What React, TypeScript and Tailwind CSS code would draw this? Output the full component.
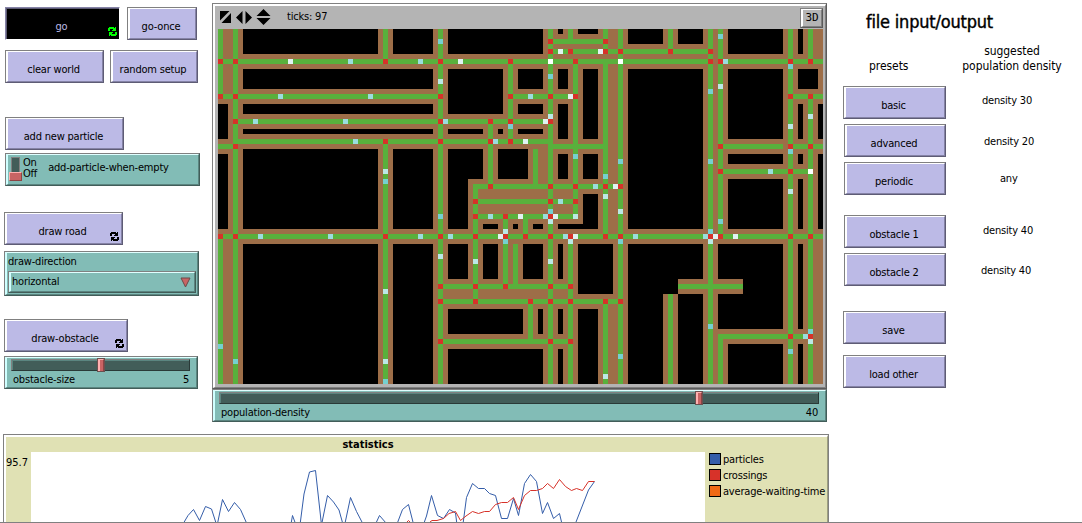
import React from "react";

type Rect = [number, number, number, number];
type Car = [number, number, string];

// Open ground, as [left, top, right, bottom] in patch units.
const GROUND: Rect[] = [
  [5, 0, 32, 5], [35, 0, 43, 5], [46, 0, 65, 5], [68, 0, 69, 1], [72, 0, 76, 1],
  [82, 0, 89, 3], [92, 0, 97, 3], [102, 0, 113, 5], [116, 0, 117, 5],
  [5, 8, 43, 12], [5, 15, 43, 17], [5, 20, 43, 21], [0, 15, 2, 22], [0, 25, 2, 40],
  [5, 24, 32, 40], [35, 24, 43, 40], [46, 8, 57, 17], [60, 8, 65, 12], [60, 15, 65, 17],
  [60, 20, 65, 21], [46, 20, 53, 21], [56, 20, 57, 21], [68, 8, 70, 12], [68, 15, 70, 22],
  [73, 8, 76, 22], [46, 24, 50, 40], [50, 24, 53, 30], [56, 24, 62, 30], [68, 25, 70, 30],
  [73, 25, 76, 30], [73, 33, 76, 40], [68, 39, 76, 40], [53, 39, 56, 40], [59, 39, 60, 40],
  [63, 39, 65, 40], [5, 43, 32, 71], [35, 43, 43, 71], [46, 43, 50, 50], [53, 43, 56, 50],
  [61, 43, 65, 50], [68, 43, 69, 50], [72, 43, 79, 53], [46, 56, 61, 61], [64, 56, 65, 61],
  [68, 56, 69, 61], [72, 56, 76, 71], [46, 64, 65, 71], [68, 64, 69, 71],
  [82, 8, 97, 40], [102, 8, 113, 22], [102, 25, 113, 27], [102, 30, 113, 40],
  [116, 8, 120, 12], [116, 15, 117, 22], [120, 15, 121, 22], [120, 25, 121, 40],
  [116, 25, 117, 27], [116, 30, 117, 40], [82, 43, 92, 53], [92, 43, 97, 50],
  [82, 53, 89, 71], [92, 53, 97, 71], [100, 43, 113, 50], [105, 50, 113, 53],
  [100, 53, 113, 60], [102, 63, 113, 71], [116, 43, 117, 60], [116, 63, 117, 71],
];

// Horizontal roads: [row, first column, end column]
const ROWS: [number, number, number][] = [
  [2, 66, 78], [4, 66, 99], [6, 0, 99], [6, 100, 121], [13, 0, 45], [13, 58, 72],
  [13, 114, 121], [18, 3, 67], [22, 3, 67], [23, 0, 4], [23, 66, 78], [23, 100, 113],
  [23, 114, 121], [28, 100, 119], [31, 51, 81], [34, 51, 72], [37, 51, 72], [41, 0, 121],
  [51, 44, 71], [51, 92, 105], [54, 44, 81], [61, 100, 119], [62, 44, 71],
];

// Vertical roads: [column, first row, end row]
const COLS: [number, number, number][] = [
  [0, 0, 14], [0, 41, 71], [3, 0, 71], [33, 0, 7], [33, 22, 71], [44, 0, 71], [51, 31, 55],
  [54, 18, 32], [57, 37, 52], [58, 6, 23], [59, 43, 52], [61, 37, 42], [62, 54, 63],
  [63, 24, 32], [66, 0, 71], [70, 0, 3], [70, 41, 71], [71, 6, 38], [77, 0, 5], [77, 6, 42],
  [77, 54, 71], [80, 0, 71], [90, 0, 5], [90, 53, 71], [98, 0, 71], [100, 0, 42],
  [100, 61, 71], [114, 0, 71], [118, 0, 7], [118, 13, 71],
];

const CROSSINGS: [number, number[]][] = [
  [2, [66, 77]], [4, [66, 70, 77, 80, 90, 98]],
  [6, [0, 3, 33, 44, 58, 71, 98, 100, 114, 118]],
  [13, [0, 3, 44, 58, 66, 71, 114, 118]], [18, [3, 44, 54, 58, 66]],
  [22, [33, 44, 54, 58]], [23, [3, 100, 114, 118]], [28, [100, 114]],
  [31, [54, 66, 71, 77, 80]], [34, [51, 66, 71]], [37, [51, 57, 66]],
  [41, [0, 3, 33, 44, 51, 57, 61, 66, 70, 77, 80, 98, 100, 114, 118]],
  [51, [44, 51, 57, 66, 70]], [54, [44, 51, 62, 66, 70, 77, 80]],
  [61, [114, 118]], [62, [44, 66, 70]],
];

const A = "#75d0d0";
const B = "#9adddd";
const C = "#bbe8e6";
const D = "#e0f3f2";
const W = "#ffffff";
const CARS: Car[] = [
  [14, 6, D], [26, 6, B], [40, 6, B], [12, 13, B], [30, 13, B], [7, 18, B], [25, 18, B],
  [27, 22, B], [33, 28, C], [33, 30, A], [44, 2, A], [48, 6, D], [44, 10, C], [66, 6, W],
  [68, 4, D], [76, 4, D], [66, 9, A], [62, 13, B], [70, 13, D], [66, 17, C], [65, 18, D],
  [45, 18, B], [58, 19, A], [55, 22, B], [61, 22, D], [71, 25, A], [77, 29, A], [75, 31, B],
  [79, 31, D], [77, 33, C], [68, 34, B], [66, 36, A], [80, 26, A], [80, 6, W], [80, 36, C],
  [100, 1, A], [101, 6, B], [114, 7, A], [98, 12, A], [100, 11, C], [118, 17, C],
  [114, 19, C], [114, 24, A], [98, 26, A], [110, 28, B], [118, 28, W], [114, 32, C],
  [8, 41, B], [22, 41, B], [40, 41, B], [33, 52, C], [33, 66, C], [33, 70, A], [0, 63, A],
  [3, 66, A], [44, 37, A], [54, 37, B], [60, 37, D], [65, 37, B], [67, 37, D], [71, 37, C],
  [66, 38, C], [57, 40, C], [46, 41, B], [56, 41, D], [57, 42, A], [69, 41, B], [71, 41, D],
  [70, 42, C], [44, 45, C], [51, 46, C], [66, 46, C], [77, 69, C], [80, 65, A], [80, 42, A],
  [83, 41, B], [97, 41, B], [99, 41, D], [103, 41, D], [98, 40, A], [98, 42, C],
  [100, 38, A], [98, 59, A], [114, 64, A], [117, 61, B], [118, 60, A], [118, 62, C],
];

function World() {
  return (
    <svg width="605" height="355" viewBox="0 0 121 71" shapeRendering="crispEdges" className="block">
      <rect width="121" height="71" fill="#9d6e48" />
      {GROUND.map(([l, t, r, b], i) => (
        <rect key={i} x={l} y={t} width={r - l} height={b - t} fill="#000" />
      ))}
      {ROWS.map(([y, a, b], i) => (
        <rect key={i} x={a} y={y} width={b - a} height="1" fill="#59b03c" />
      ))}
      {COLS.map(([x, a, b], i) => (
        <rect key={i} x={x} y={a} width="1" height={b - a} fill="#59b03c" />
      ))}
      {CROSSINGS.map(([y, xs]) =>
        xs.map((x) => <rect key={`${x}-${y}`} x={x} y={y} width="1" height="1" fill="#d73229" />)
      )}
      {CARS.map(([x, y, c], i) => (
        <rect key={i} x={x} y={y} width="1" height="1" fill={c} />
      ))}
    </svg>
  );
}

function LoopIcon({ className }: { className: string }) {
  return (
    <svg width="9" height="10" viewBox="0 0 9 10" shapeRendering="crispEdges" fill="currentColor" className={className}>
      <path d="M1 0h5v1h1v-1h1v4h-4v-1h1v-1h-3v2h-2v-3h1z" />
      <path d="M8 9h-5v-1h-1v1h-1v-4h4v1h-1v1h3v-2h2v3h-1z" />
    </svg>
  );
}

function Button({ label, className = "", loop = false }: { label: string; className?: string; loop?: boolean }) {
  return (
    <button
      className={`block h-[33px] shrink-0 border border-t-[#808080] border-l-[#808080] border-r-[#5e5c75] border-b-[#5e5c75] ${className}`}
    >
      <span className="relative flex h-full items-center justify-center border-t border-r border-b border-l-2 border-t-white border-r-[#8583a6] border-b-[#8583a6] border-l-white bg-[#bcbae6] pt-[7px] pr-[3px]">
        {label}
        {loop && <LoopIcon className="absolute right-[2px] bottom-[1px]" />}
      </span>
    </button>
  );
}

function Teal({ className = "", children }: { className?: string; children: React.ReactNode }) {
  return (
    <div className={`shrink-0 border border-t-[#808080] border-l-[#808080] border-r-[#425d59] border-b-[#425d59] ${className}`}>
      <div className="h-full border-t border-r border-b border-l-2 border-t-[#e0ffff] border-r-[#5b8580] border-b-[#5b8580] border-l-[#d0ffff] bg-[#82bcb6]">
        {children}
      </div>
    </div>
  );
}

function Slider({ label, value, className, left, right, knob }: { label: string; value: string; className: string; left: string; right: string; knob: string }) {
  return (
    <Teal className={`h-[33px] ${className}`}>
      <div className={`flex h-full flex-col ${left} ${right}`}>
        <div className="relative mt-[1px] h-[12px] border border-t-[#808080] border-r-[#2a3a38] border-b-[#2a3a38] border-l-[#808080]">
          <div className="h-full border-t border-l border-[#5b8580] bg-[#425d59]" />
          <div className={`absolute -top-[2px] h-[14px] w-[8px] border border-[#6b5050] ${knob}`}>
            <div className="h-full border-t border-r border-l-2 border-t-[#ffb0b0] border-r-[#8c4545] border-l-[#ffb0b0] bg-[#c86464]" />
          </div>
        </div>
        <div className="flex justify-between pr-[1px] pl-[2px] pt-[2px] leading-[14px]">
          <span>{label}</span>
          <span>{value}</span>
        </div>
      </div>
    </Teal>
  );
}

function LeftPanel() {
  return (
    <div className="flex w-[212px] shrink-0 flex-col pt-[7px] pl-1">
      <div className="ml-px flex gap-[7px]">
        <button className="h-[33px] w-[115px] border border-t-[#8583a6] border-r-white border-b-white border-l-[#8583a6]">
          <span className="relative flex h-full items-center justify-center border-t border-l border-[#5e5c75] bg-black pt-[6px] pr-[3px] text-[#bcbae6]">
            go
            <LoopIcon className="absolute right-[2px] bottom-[2px] text-[#00ff00]" />
          </span>
        </button>
        <Button label="go-once" className="w-[70px]" />
      </div>
      <div className="mt-[10px] ml-px flex gap-[6px]">
        <Button label="clear world" className="w-[99px]" />
        <Button label="random setup" className="w-[88px]" />
      </div>
      <Button label="add new particle" className="mt-[34px] ml-px w-[119px]" />
      <Teal className="mt-[3px] ml-px h-[33px] w-[195px]">
        <div className="flex h-full">
          <div className="relative mt-[2px] ml-[3px] h-[24px] w-[9px] border border-[#808080] bg-[#425d59]">
            <div className="absolute -bottom-px -left-[3px] h-[9px] w-[13px] border border-[#8c4545] border-t-[#ffb0b0] border-l-[#ffb0b0] bg-[#c86464]" />
          </div>
          <div className="mt-[2px] ml-[3px] leading-[11px]">
            <div>On</div>
            <div>Off</div>
          </div>
          <span className="mt-[6px] ml-[11px] leading-[14px]">add-particle-when-empty</span>
        </div>
      </Teal>
      <Button label="draw road" loop className="mt-[26px] w-[119px]" />
      <Teal className="mt-[6px] h-[45px] w-[195px]">
        <div className="px-[1px] pt-[2px] leading-[14px]">draw-direction</div>
        <Teal className="mx-[1px] mt-[2px] h-[22px]">
          <div className="flex h-full items-center justify-between pr-[3px] pl-[1px]">
            <span>horizontal</span>
            <svg width="11" height="11" viewBox="0 0 11 11">
              <path d="M1 1h9L5.500 10z" fill="#c86464" stroke="#6b4a48" />
            </svg>
          </div>
        </Teal>
      </Teal>
      <Button label="draw-obstacle" loop className="mt-[23px] w-[124px]" />
      <Slider label="obstacle-size" value="5" className="mt-1 w-[194px]" left="pl-[4px]" right="pr-[6px]" knob="left-[85px]" />
    </div>
  );
}

function CenterPanel() {
  return (
    <div className="flex w-[615px] shrink-0 flex-col pt-[3px]">
      <div className="border border-t-[#808080] border-r-[#5a5a5a] border-b-[#5a5a5a] border-l-[#808080]">
        <div className="border-t-2 border-r border-b border-l-2 border-t-white border-r-[#7f7f7f] border-b-[#7f7f7f] border-l-white bg-[#b4b4b4]">
          <div className="flex h-[23px] items-center pr-[2px] pl-[5px]">
            <svg width="51" height="16" viewBox="0 0 51 16" className="mt-[3px] self-start">
              <path d="M0 2h9.500L0 11.500zM11 4v10H1.500z" fill="#000" />
              <path d="M16 8.500L22.500 2v13zM32 8.500L25.500 2v13z" fill="#000" />
              <path d="M36.500 7L43.500 0L50.500 7zM36.500 9h14L43.500 16z" fill="#000" />
            </svg>
            <span className="ml-[16px] grow">ticks: 97</span>
            <div className="mt-px h-[20px] w-[23px] border border-t-[#808080] border-r-[#5a5a5a] border-b-[#5a5a5a] border-l-[#808080]">
              <div className="flex h-full items-center justify-center border-t border-r border-b border-l-2 border-t-white border-r-[#7f7f7f] border-b-[#7f7f7f] border-l-white pt-px font-['DejaVu_Sans_Mono',monospace] text-[11px]">
                3D
              </div>
            </div>
          </div>
          <div className="pr-[2px] pb-[3px] pl-[3px]">
            <World />
          </div>
        </div>
      </div>
      <Slider label="population-density" value="40" className="w-[615px]" left="pl-[4px]" right="pr-[6px]" knob="left-[475px]" />
    </div>
  );
}

function RightPanel() {
  return (
    <div className="grow pl-4">
      <h1 className="pt-[11px] pl-[23px] text-[18px] leading-[22px] [-webkit-text-stroke:0.4px_black]">file input/output</h1>
      <div className="mt-[11px] flex text-[12px] leading-[15px] tracking-[-0.06px]">
        <span className="mt-[15px] ml-[26px] w-[81px]">presets</span>
        <span className="w-[124px] text-center">
          suggested
          <br />
          population density
        </span>
      </div>
      <div className="mt-[12px] flex">
        <div className="flex w-[103px] flex-col items-end">
          <Button label="basic" className="w-[103px]" />
          <Button label="advanced" className="mt-[5px] w-[102px]" />
          <Button label="periodic" className="mt-[5px] w-[102px]" />
          <Button label="obstacle 1" className="mt-[20px] w-[102px]" />
          <Button label="obstacle 2" className="mt-[5px] w-[102px]" />
          <Button label="save" className="mt-[25px] w-[103px]" />
          <Button label="load other" className="mt-[11px] w-[103px]" />
        </div>
        <div className="flex flex-col pt-[8px] leading-[14px]">
          <span className="ml-[36px]">density 30</span>
          <span className="mt-[27px] ml-[38px]">density 20</span>
          <span className="mt-[23px] ml-[54px]">any</span>
          <span className="mt-[38px] ml-[37px]">density 40</span>
          <span className="mt-[26px] ml-[35px]">density 40</span>
        </div>
      </div>
    </div>
  );
}

const PARTICLES: string[] = [
  "183,524 188,515.500 193.500,509.500 199.500,520.500 205.500,506.500 211.500,509 217,526 222.500,499.500 228.500,511.500 234.500,502.500 240.500,509.500 247,524",
  "291,524 292.500,515.500 296,525",
  "300,525 304,494 309.500,472 315.500,470.500 321.500,525 327.500,495.500 333.500,502 339,510 344,528 350.500,497.500 356.500,511.500 363,524",
  "376,523 379.500,515.500 386,523",
  "397,524 402.500,509.500 408.500,504.500 414,526",
  "424,523 426.500,516 431.500,495.500 437.500,515.500 443.500,518.500 449.500,509.500 455.500,513 457,525",
  "463,524 466.500,497.500 472.500,483.500 478.500,488.500 484.500,488.500 489.500,493.500 495.500,495.500 501.500,518.500 507.500,518.500 513.500,498.500 518.500,515.500 524.500,483.500 530.500,474.500 536.500,481.500 542.500,513.500 547.500,502.500 553.500,518.500 559.500,513.500 562,524",
  "576,522 588.500,490 594.500,481.500",
];

const CROSSING_COUNT: string[] = [
  "406,523 408.500,520.500 411,523",
  "430,522 432,520.500 437,520.500 443.500,518.500 449,513.500 455.500,511.500 460.500,520.500 466,516 472.500,511.500 478.500,513.500 484.500,511.500 489.500,511.500 495.500,504.500 501.500,502.500 507.500,502.500 513.500,497.500 518.500,509.500 524.500,495.500 530.500,490.500 536.500,490.500 542.500,488.500 547.500,483.500 553.500,488.500 559.500,479.500 565.500,486.500 571.500,490.500 576.500,488.500 582.500,490.500 588.500,481.500 594.500,481.500",
];

function Legend({ color, label }: { color: string; label: string }) {
  return (
    <div className="flex h-4 items-center gap-[2px]">
      <span className={`mb-[2px] h-3 w-3 shrink-0 border border-black ${color}`} />
      <span>{label}</span>
    </div>
  );
}

function Statistics() {
  return (
    <div className="ml-[3px] h-[88px] w-[826px] overflow-hidden border-t border-r border-l border-[#808080]">
      <div className="h-full border-t-2 border-r border-l-2 border-t-white border-r-[#9e9f80] border-l-white bg-[#e0e1b4]">
        <div className="h-[15px] w-[724px] text-center leading-[15px] font-bold tracking-normal">statistics</div>
        <div className="flex h-[70px]">
          <div className="w-[25px] shrink-0 pt-[3px] tracking-normal">95.7</div>
          <svg width="674" height="70" viewBox="31 452 674 70" fill="none" className="shrink-0 bg-white">
            {PARTICLES.map((p) => (
              <polyline key={p} points={p} stroke="#345da9" strokeWidth="1" />
            ))}
            {CROSSING_COUNT.map((p) => (
              <polyline key={p} points={p} stroke="#d73229" strokeWidth="1" />
            ))}
          </svg>
          <div className="pl-1">
            <Legend color="bg-[#345da9]" label="particles" />
            <Legend color="bg-[#d73229]" label="crossings" />
            <Legend color="bg-[#f16a15]" label="average-waiting-time" />
          </div>
        </div>
      </div>
    </div>
  );
}

export default function App() {
  return (
    <div className="h-[523px] w-[1082px] overflow-hidden border-b border-[#808080] bg-white font-['DejaVu_Sans_Condensed','DejaVu_Sans',sans-serif] text-[11px] tracking-[-0.2px] whitespace-nowrap text-black">
      <div className="flex h-[434px]">
        <LeftPanel />
        <CenterPanel />
        <RightPanel />
      </div>
      <Statistics />
    </div>
  );
}
